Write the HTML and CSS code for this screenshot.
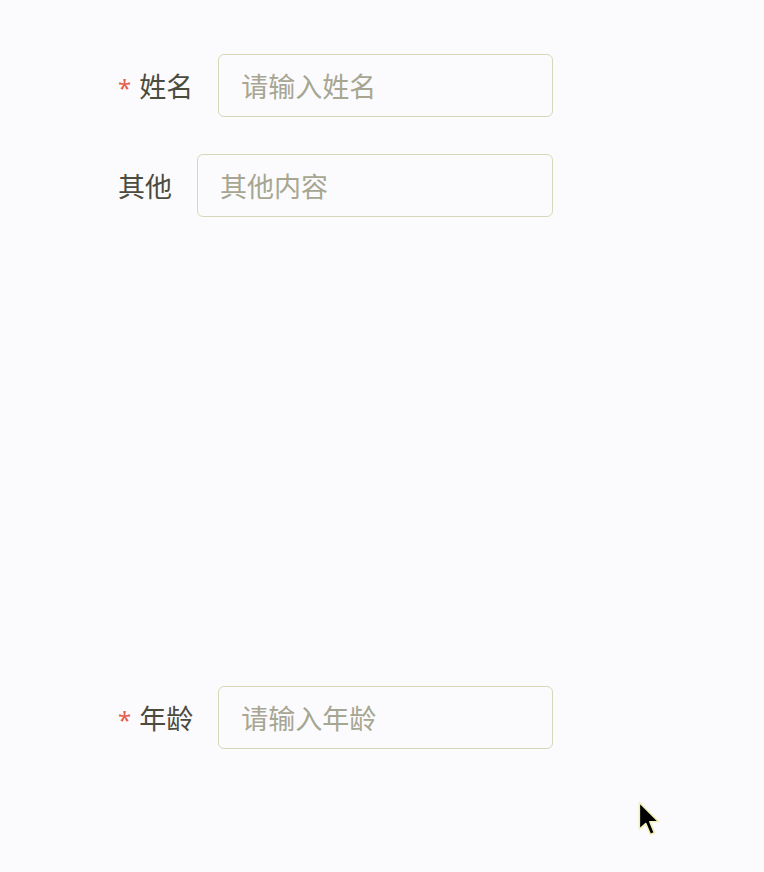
FILE: index.html
```html
<!DOCTYPE html>
<html lang="zh-CN">
<head>
<meta charset="utf-8">
<title>表单</title>
<link rel="stylesheet" href="styles.css">
</head>
<body>
<form class="form">
  <div class="row">
    <label class="label"><span class="req">*</span>姓名</label>
    <input class="input" type="text" placeholder="请输入姓名">
  </div>
  <div class="row">
    <label class="label">其他</label>
    <input class="input" type="text" placeholder="其他内容">
  </div>
  <div class="spacer"></div>
  <div class="row">
    <label class="label"><span class="req">*</span>年龄</label>
    <input class="input" type="text" placeholder="请输入年龄">
  </div>
</form>
<svg class="cursor" width="28" height="40" viewBox="0 0 24 34">
  <path d="M2 2 L2 25 L7.5 20 L11.5 29.5 L15 28 L11 18.5 L18.5 18.5 Z" fill="#000" stroke="#f3f0b8" stroke-width="1.4" stroke-linejoin="round"/>
</svg>
</body>
</html>
```

FILE: styles.css
```css
html, body {
  margin: 0;
  padding: 0;
  background: #fbfbfe;
}
body {
  width: 764px;
  height: 872px;
  overflow: hidden;
  position: relative;
  font-family: "Noto Sans CJK SC", "Noto Sans", sans-serif;
}
.form {
  display: flex;
  flex-direction: column;
  gap: 37px;
  padding: 54px 0 0 118px;
  width: 435px;
}
.row {
  display: flex;
  align-items: center;
  height: 63px;
}
.label {
  font-size: 27px;
  color: #4b4b3e;
  padding-right: 25px;
  white-space: nowrap;
  line-height: 1;
}
.req {
  color: #e2604f;
  margin-right: 8px;
  font-family: "Noto Sans", sans-serif;
  font-size: 24px;
}
.input {
  flex: 1;
  min-width: 0;
  height: 63px;
  box-sizing: border-box;
  border: 1.5px solid #d8d8b8;
  border-radius: 6px;
  background: #fbfbfe;
  padding: 0 22px;
  font-family: "Noto Sans CJK SC", "Noto Sans", sans-serif;
  font-size: 27px;
  color: #4b4b3e;
  outline: none;
}
.input::placeholder {
  color: #a6a692;
}
.spacer {
  height: 395px;
}
.cursor {
  position: absolute;
  left: 637px;
  top: 800px;
}
```
